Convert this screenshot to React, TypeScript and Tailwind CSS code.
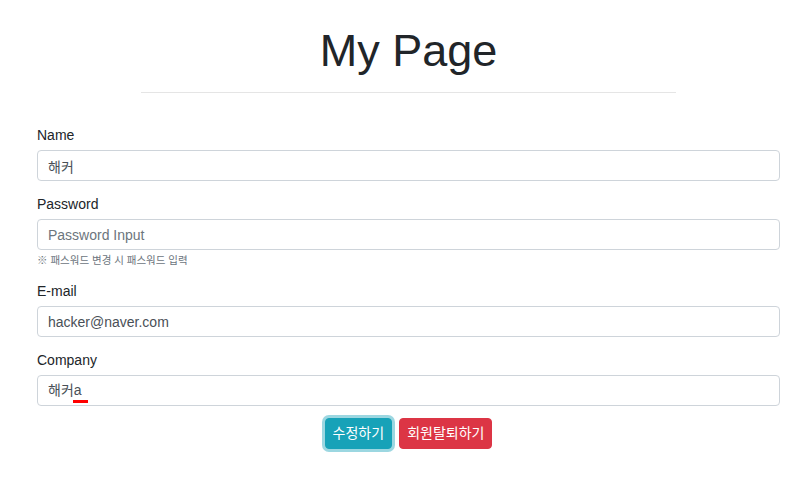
import { useState } from "react";

const font = { fontFamily: '"Liberation Sans", Arial, "Noto Sans CJK KR", sans-serif' };

function Field({ label, children }: { label: string; children: React.ReactNode }) {
  return (
    <div className="mb-[12px]">
      <label className="mb-[4px] block pt-[1px] text-[14px] leading-[21px] text-[#212529]">{label}</label>
      {children}
    </div>
  );
}

const inputCls =
  "block h-[31px] w-full rounded-[4px] border border-[#ced4da] bg-white px-[10px] text-[14px] leading-[21px] text-[#495057] outline-none placeholder:text-[#6c757d]";

export default function App() {
  const [name, setName] = useState("해커");
  const [pw, setPw] = useState("");
  const [email, setEmail] = useState("hacker@naver.com");

  return (
    <div className="min-h-screen bg-white pb-10 pl-[37px] pr-[27px]" style={font}>
      <h1 className="pt-[24px] text-center text-[45px] font-normal leading-[54px] text-[#212529]">My Page</h1>
      <hr className="mx-auto mt-[14px] w-[535px] border-t border-[#e5e5e5]" />

      <form className="mt-[31px]" onSubmit={(e) => e.preventDefault()}>
        <Field label="Name">
          <input className={inputCls} style={font} value={name} onChange={(e) => setName(e.target.value)} />
        </Field>

        <div className="mb-[12px]">
          <label className="mb-[4px] block pt-[1px] text-[14px] leading-[21px] text-[#212529]">Password</label>
          <input
            type="password"
            className={inputCls}
            style={font}
            placeholder="Password Input"
            value={pw}
            onChange={(e) => setPw(e.target.value)}
          />
          <p className="mt-[3px] mb-[2px] text-[10.5px] leading-[15px] text-[#6c757d]">※ 패스워드 변경 시 패스워드 입력</p>
        </div>

        <Field label="E-mail">
          <input className={inputCls} style={font} value={email} onChange={(e) => setEmail(e.target.value)} />
        </Field>

        <Field label="Company">
          <div className={inputCls + " flex items-center"}>
            <span>해커</span>
            <span className="relative">
              a
              <span className="absolute left-[-1px] right-[-6px] top-[20px] h-[3px] bg-[#ff0000]" />
            </span>
          </div>
        </Field>

        <div className="flex justify-center gap-[7px]">
          <button
            type="submit"
            className="h-[31px] rounded-[4px] border border-[#17a2b8] bg-[#17a2b8] px-[7px] text-[14px] text-white shadow-[0_0_0_3px_rgba(58,176,195,0.5)]"
          >
            수정하기
          </button>
          <button
            type="button"
            className="h-[31px] rounded-[4px] border border-[#dc3545] bg-[#dc3545] px-[7px] text-[14px] text-white"
          >
            회원탈퇴하기
          </button>
        </div>
      </form>
    </div>
  );
}
